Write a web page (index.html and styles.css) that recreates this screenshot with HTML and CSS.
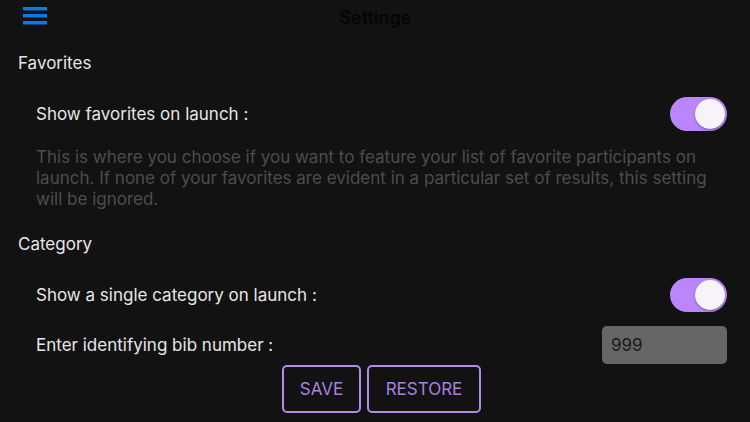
FILE: index.html
```html
<!DOCTYPE html>
<html>
<head>
<meta charset="utf-8">
<link rel="stylesheet" href="styles.css">
</head>
<body>
<div class="header">
  <div class="menu">
    <svg width="24" height="18" viewBox="0 0 24 18"><rect x="0" y="0" width="24" height="3.5" fill="#0a7be6"/><rect x="0" y="7" width="24" height="3.5" fill="#0a7be6"/><rect x="0" y="14" width="24" height="3.5" fill="#0a7be6"/></svg>
  </div>
  <div class="title">Settings</div>
  <div></div>
</div>
<div class="section-title first">Favorites</div>
<div class="row toggle-row first-row">
  <span class="label">Show favorites on launch :</span>
  <span class="toggle"><span class="knob"></span></span>
</div>
<p class="desc">This is where you choose if you want to feature your list of favorite participants on launch. If none of your favorites are evident in a particular set of results, this setting will be ignored.</p>
<div class="section-title">Category</div>
<div class="row toggle-row cat-row">
  <span class="label">Show a single category on launch :</span>
  <span class="toggle"><span class="knob"></span></span>
</div>
<div class="row input-row">
  <span class="label">Enter identifying bib number :</span>
  <span class="input">999</span>
</div>
<div class="buttons">
  <button class="btn save">SAVE</button>
  <button class="btn restore">RESTORE</button>
</div>
</body>
</html>
```
FILE: styles.css
```css
html, body {
  margin: 0;
  padding: 0;
  background: #121212;
  font-family: Inter, "Noto Sans", sans-serif;
  color: #e6e6e6;
}
.header {
  display: grid;
  grid-template-columns: 1fr auto 1fr;
  align-items: center;
  height: 34px;
  padding-left: 23px;
  padding-right: 23px;
}
.menu {
  height: 18px;
  margin-top: -2px;
}
.menu svg { display: block; }
.title {
  font-size: 18px;
  font-weight: 600;
  color: #050505;
  line-height: 21px;
}
.section-title {
  font-size: 17px;
  line-height: 21px;
  padding-left: 18px;
  margin-top: 24px;
}
.section-title.first { margin-top: 18.5px; }
.row {
  display: flex;
  justify-content: space-between;
  align-items: center;
  padding-left: 36px;
  padding-right: 23px;
}
.label {
  font-size: 17px;
  line-height: 21px;
}
.first-row { margin-top: 23.5px; }
.cat-row { margin-top: 23.5px; }
.toggle {
  width: 57px;
  height: 34px;
  border-radius: 17px;
  background: #bb86fc;
  display: flex;
  justify-content: flex-end;
  align-items: center;
  padding-right: 2px;
  box-sizing: border-box;
}
.knob {
  width: 30px;
  height: 30px;
  border-radius: 50%;
  background: #f6f4f8;
  box-shadow: 0 1px 2px rgba(60, 20, 100, 0.5);
}
.desc {
  margin: 15.5px 0 0 0;
  padding: 0 23px 0 36px;
  font-size: 17px;
  line-height: 21px;
  color: #4d4d4d;
}
.input-row { margin-top: 14px; }
.input {
  width: 125px;
  height: 38px;
  box-sizing: border-box;
  background: #666666;
  border-radius: 5px;
  color: #1a1a1a;
  font-size: 17px;
  line-height: 38px;
  padding-left: 9px;
}
.buttons {
  display: flex;
  justify-content: center;
  gap: 6px;
  margin-top: 1px;
  padding-left: 13px;
}
.btn {
  height: 48px;
  box-sizing: border-box;
  background: transparent;
  border: 2px solid #b48be8;
  border-radius: 5px;
  color: #a97fe0;
  font-family: Inter, "Noto Sans", sans-serif;
  font-size: 17px;
  padding: 0;
}
.save { width: 79px; }
.restore { width: 114px; }
```
